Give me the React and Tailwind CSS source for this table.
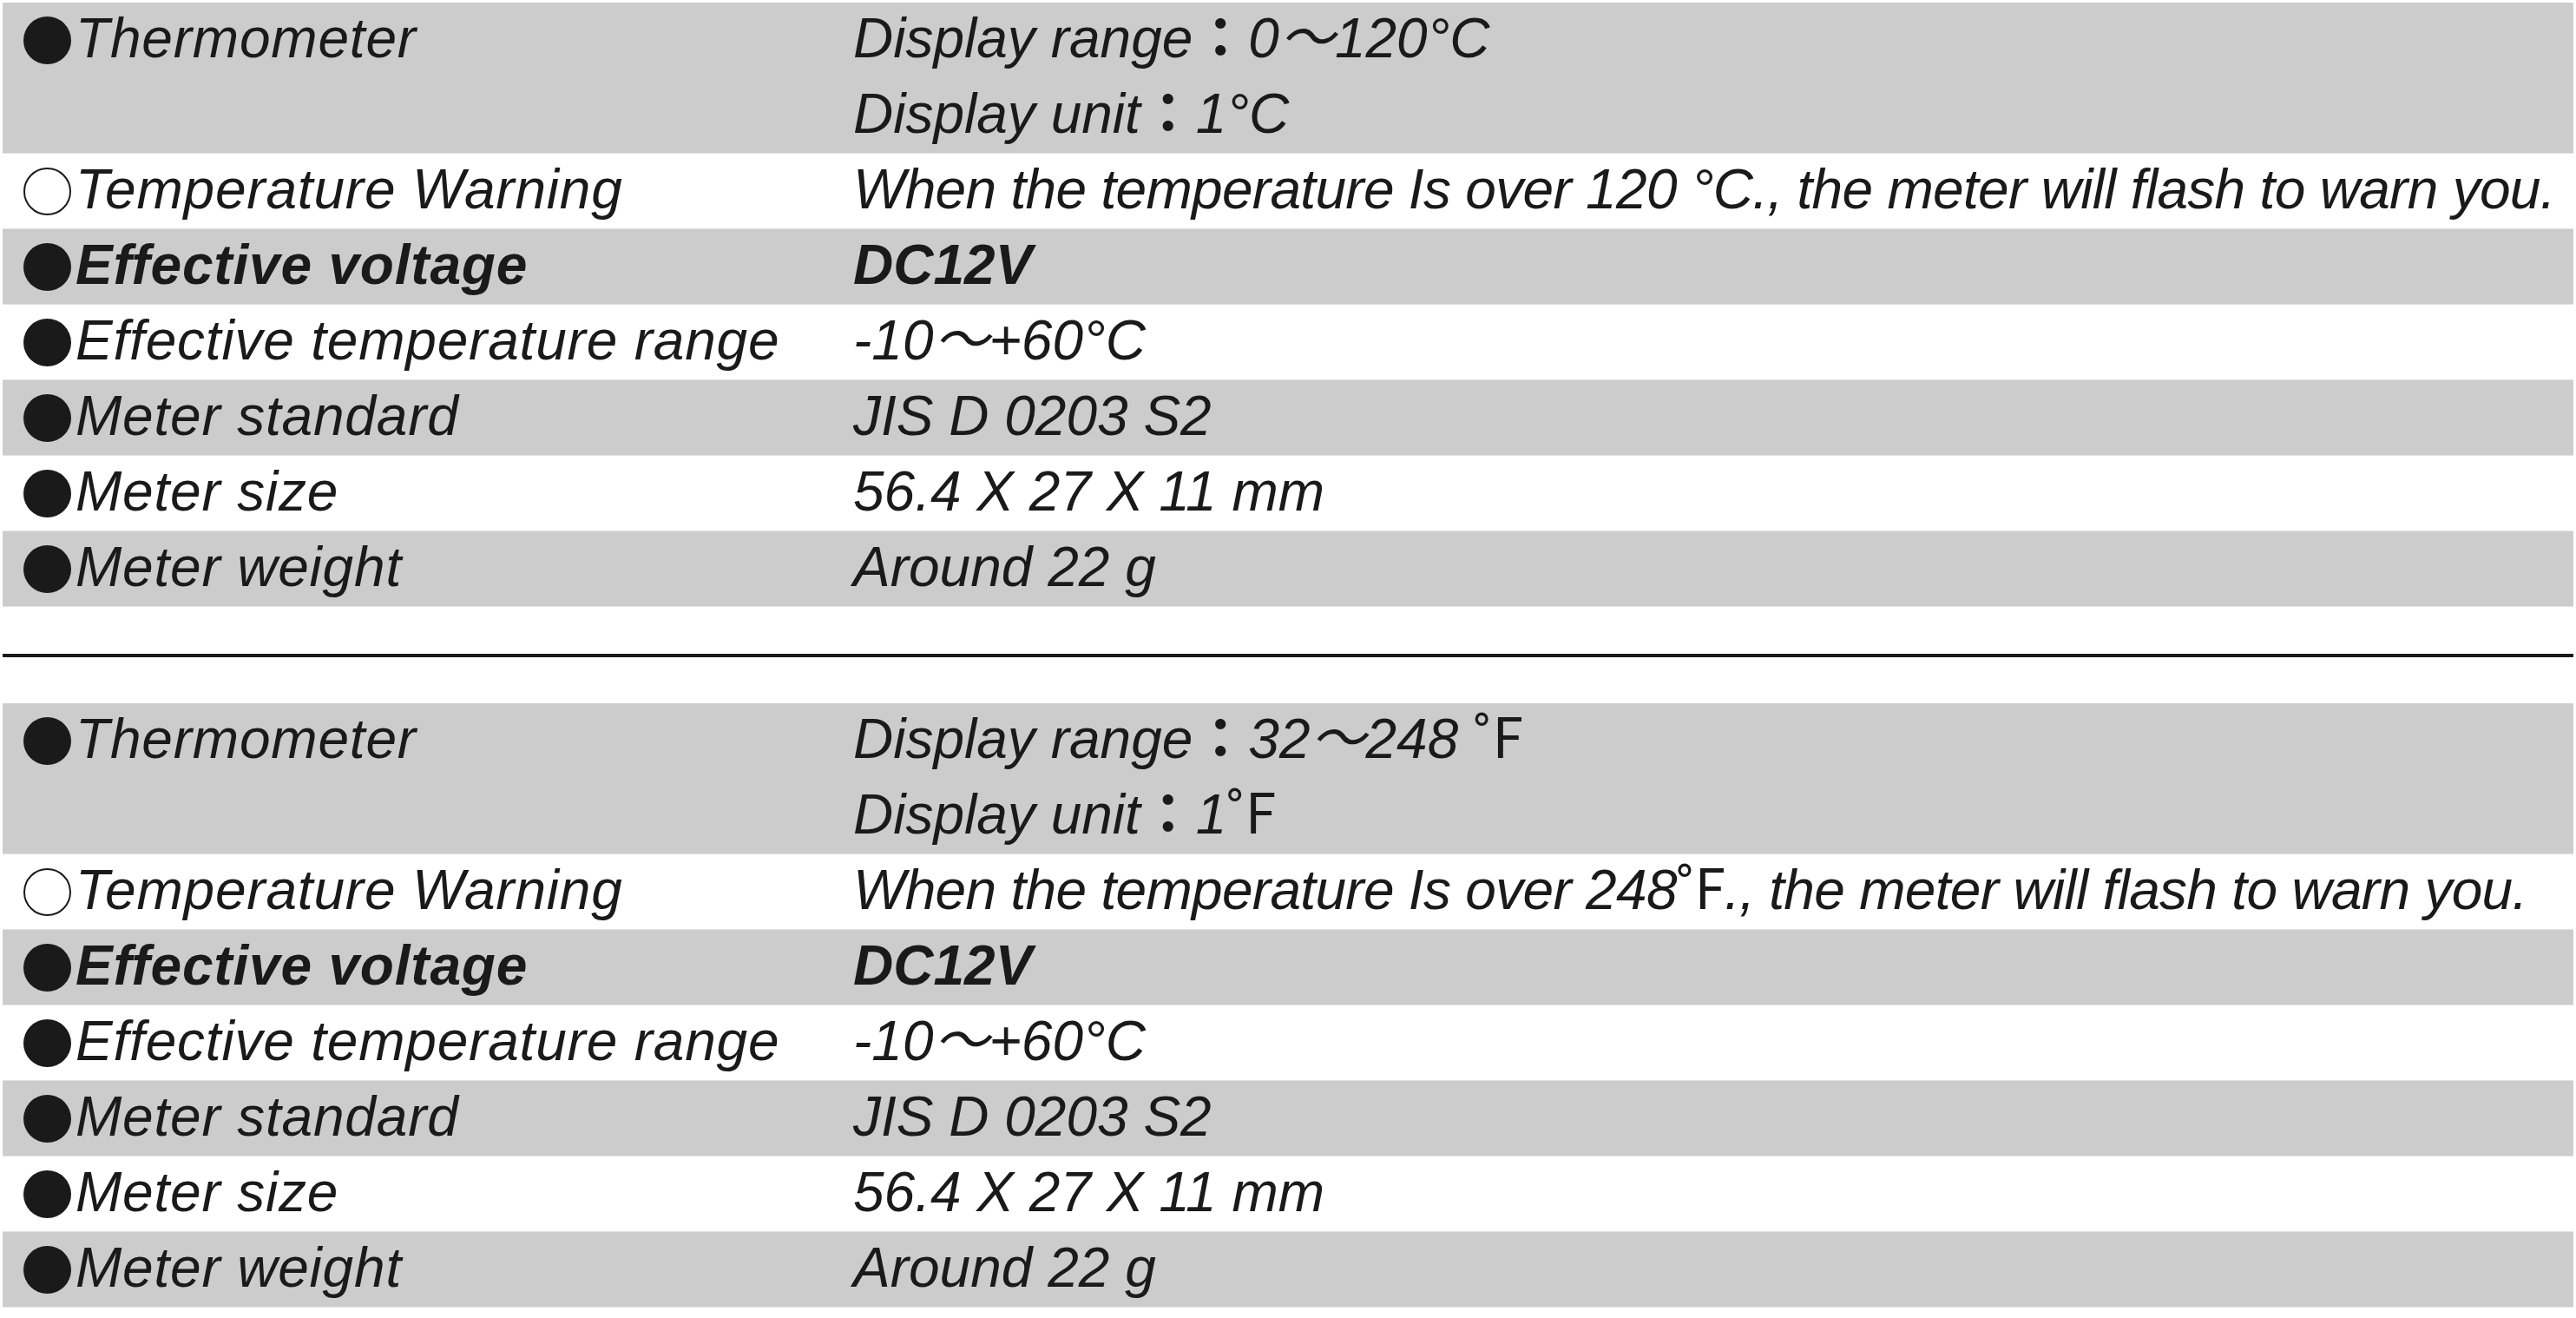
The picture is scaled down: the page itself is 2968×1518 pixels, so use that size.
const FONT = { fontFamily: '"Liberation Sans", "Noto Sans CJK TC", sans-serif' }

function Deg({ f }) {
  // Fahrenheit variant uses an upright ring + F like the original sheet
  if (f) {
    return <span className="not-italic leading-none font-['Noto_Sans_CJK_TC',sans-serif]">˚F</span>
  }
  return <span>°C</span>
}

const Colon = () => <span className="not-italic font-bold leading-none">：</span>

const rows = (f) => [
  {
    label: 'Thermometer',
    gray: true,
    value: f
      ? [<>Display range<Colon />32～248 <Deg f /></>, <>Display unit<Colon />1<Deg f /></>]
      : [<>Display range<Colon />0～120<Deg /></>, <>Display unit<Colon />1<Deg /></>],
  },
  {
    label: 'Temperature Warning',
    hollow: true,
    tight: true,
    value: f
      ? [<>When the temperature Is over 248<Deg f />., the meter will flash to warn you.</>]
      : [<>When the temperature Is over 120 <Deg />., the meter will flash to warn you.</>],
  },
  { label: 'Effective voltage', gray: true, bold: true, value: ['DC12V'] },
  { label: 'Effective temperature range', value: [<>-10～+60<Deg /></>] },
  { label: 'Meter standard', gray: true, value: ['JIS D 0203 S2'] },
  { label: 'Meter size', value: ['56.4 X 27 X 11 mm'] },
  { label: 'Meter weight', gray: true, value: ['Around 22 g'] },
]

function Row({ row }) {
  return (
    <div
      className={`flex shadow-[inset_0_-1px_0_#e2e2e2] ${row.gray ? 'bg-[#cccccc]' : 'bg-white'} ${
        row.bold ? 'font-bold' : ''
      }`}
    >
      <div className="w-[980px] shrink-0 flex items-start pl-[24px] h-[87px]">
        <span
          className={`mt-[16px] w-[55px] h-[55px] rounded-full shrink-0 ${
            row.hollow ? 'border-[2px] border-[#1a1a1a]' : 'bg-[#1a1a1a]'
          }`}
        />
        <span className="ml-[5px] whitespace-nowrap tracking-[0.8px]">{row.label}</span>
      </div>
      <div className="flex flex-col">
        {row.value.map((v, i) => (
          <div
            key={i}
            className={`h-[87px] whitespace-nowrap ${row.tight ? 'tracking-[-0.7px]' : ''}`}
          >
            {v}
          </div>
        ))}
      </div>
    </div>
  )
}

function Section({ f }) {
  return (
    <div>
      {rows(f).map((r, i) => (
        <Row key={i} row={r} />
      ))}
    </div>
  )
}

export default function App() {
  return (
    <div
      className="bg-white min-h-screen pt-[3px] px-[3px] text-[#1a1a1a] italic text-[64px] leading-[82px]"
      style={FONT}
    >
      <Section />
      <div className="mt-[54px] mb-[53px] h-[4px] bg-[#1a1a1a]" />
      <Section f />
    </div>
  )
}
